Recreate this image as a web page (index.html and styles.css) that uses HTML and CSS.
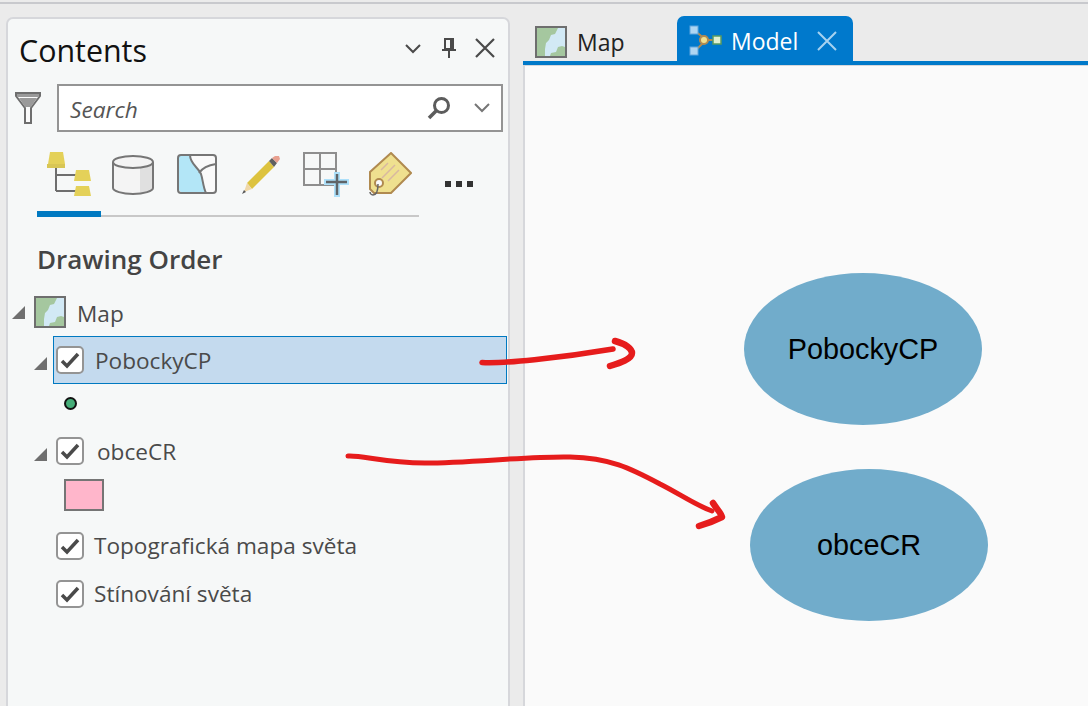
FILE: index.html
```html
<!DOCTYPE html>
<html lang="en">
<head>
    <meta charset="UTF-8">
    <meta name="viewport" content="width=device-width, initial-scale=1.0">
    <title>Contents and Model</title>
    <link rel="stylesheet" href="styles.css">
</head>
<body>
    <svg width="0" height="0" class="defs">
        <defs>
            <symbol id="map-icon" viewBox="0 0 32 32">
                <rect x="1" y="1" width="30" height="30" fill="#d2e9f5" stroke="#6e6e6e" stroke-width="2"/>
                <path d="M2 2h21l-3 6-4 1-2 5-3 3-1 6v7H2z" fill="#a5c79f"/>
                <path d="M30 30H15l1-3 5-1 2-5 4-1 3 1z" fill="#a5c79f"/>
            </symbol>
            <symbol id="check-icon" viewBox="0 0 28 28">
                <rect x="1" y="1" width="26" height="26" rx="4" fill="#fff" stroke="#949494" stroke-width="2"/>
                <path d="M6 15l5 5 11-12" fill="none" stroke="#4a4a4a" stroke-width="3.500"/>
            </symbol>
            <symbol id="tri-icon" viewBox="0 0 13 13">
                <path d="M13 0v13H0z" fill="#6f6f6f"/>
            </symbol>
        </defs>
    </svg>

    <div class="top-line"></div>

    <div class="main">
        <!-- Contents pane -->
        <div class="panel">
            <div class="panel-head">
                <span class="panel-title">Contents</span>
                <div class="panel-actions">
                    <svg class="panel-chevron" width="16" height="10" viewBox="0 0 16 10"><path d="M1 1l7 7 7-7" fill="none" stroke="#4a4a4a" stroke-width="2"/></svg>
                    <svg width="16" height="22" viewBox="0 0 16 22"><path d="M4 2h8v10H4zM1 13h14M8 13v8M10 2v10" fill="none" stroke="#4a4a4a" stroke-width="2"/></svg>
                    <svg width="20" height="20" viewBox="0 0 20 20"><path d="M1 1l18 18M19 1L1 19" fill="none" stroke="#4a4a4a" stroke-width="2.200"/></svg>
                </div>
            </div>

            <div class="search-row">
                <svg width="26" height="32" viewBox="0 0 26 32"><path d="M1 1h24v3L16 16v15h-6V16L1 4z" fill="#fafafa" stroke="#6e6e6e" stroke-width="2"/><path d="M2 2h22v3H2zM4 6h18l-6 9h-6z" fill="#9a9a9a"/></svg>
                <div class="search-box">
                    <span class="search-text">Search</span>
                    <svg class="search-glass" width="24" height="24" viewBox="0 0 24 24"><circle cx="14.500" cy="9.500" r="7" fill="none" stroke="#5c5c5c" stroke-width="3"/><path d="M9.500 14.500L2 22" stroke="#5c5c5c" stroke-width="3.500"/></svg>
                    <svg width="16" height="10" viewBox="0 0 16 10"><path d="M1 1l7 7 7-7" fill="none" stroke="#767676" stroke-width="2"/></svg>
                </div>
            </div>

            <div class="tool-row">
                <svg class="tool-tree" width="44" height="44" viewBox="0 0 44 44">
                    <path d="M9 16v23M9 23h20M9 39h20" fill="none" stroke="#6e6e6e" stroke-width="2"/>
                    <path d="M3 0h13l2 12H1z" fill="#e4d159"/><path d="M0 12h18v4H0z" fill="#d8c655"/>
                    <path d="M29 18h13l2 11H27zM29 34h13l2 10H27z" fill="#e4d159"/>
                </svg>
                <svg class="tool-db" width="42" height="40" viewBox="0 0 42 40">
                    <path d="M1 7v26c0 3 9 6 20 6s20-3 20-6V7z" fill="#f4f4f4"/>
                    <path d="M28 12l13-5v26c0 3-6 5-13 6z" fill="#e0e0e0"/>
                    <path d="M1 7v26c0 3 9 6 20 6s20-3 20-6V7" fill="none" stroke="#767676" stroke-width="2"/>
                    <ellipse cx="21" cy="7" rx="20" ry="6" fill="#f4f4f4" stroke="#767676" stroke-width="2"/>
                </svg>
                <svg class="tool-basemap" width="40" height="40" viewBox="0 0 40 40">
                    <rect x="1" y="1" width="38" height="38" rx="3" fill="#fafafa"/>
                    <path d="M2 2h12c0 8 8 12 11 20 1 7 3 12 4 16H4l-2-2z" fill="#b3e6f7"/>
                    <path d="M13 1c0 9 8 12 11 19 2 6 2 13 5 19M22 19c4-6 10-8 17-9" fill="none" stroke="#767676" stroke-width="2"/>
                    <rect x="1" y="1" width="38" height="38" rx="3" fill="none" stroke="#767676" stroke-width="2"/>
                </svg>
                <svg class="tool-pencil" width="40" height="40" viewBox="0 0 40 40">
                    <path d="M6 29L28 7l5 6-22 22z" fill="#ddc33f"/>
                    <path d="M28 7l3-3 5 5-3 4z" fill="#606060"/>
                    <path d="M31 4l3-2h4l1 3-3 4z" fill="#e8a090"/>
                    <path d="M6 29l5 6-8 3z" fill="#f0d8a8"/>
                    <path d="M3 36l2 2-4 2z" fill="#555"/>
                </svg>
                <svg class="tool-grid" width="46" height="46" viewBox="0 0 46 46">
                    <path d="M1 1h32v32H1zM17 1v32M1 17h32" fill="none" stroke="#8e8e8e" stroke-width="2"/>
                    <path d="M21 27h10v-7h6v7h9v6h-9v12h-6V33H21z" fill="#ade0fa"/>
                    <path d="M34 22v21M23 30h21" stroke="#5f6468" stroke-width="2.500"/>
                </svg>
                <svg class="tool-tag" width="44" height="46" viewBox="0 0 44 46">
                    <path d="M23 1l20 20-20 20H6L2 37V20z" fill="#efe08f" stroke="#b08a50" stroke-width="2"/>
                    <path d="M20 11l-7 7M27 13L14 26M31 18l-11 11" stroke="#d8b8a0" stroke-width="1.500"/>
                    <circle cx="11" cy="31" r="4" fill="#fafafa" stroke="#b08a50" stroke-width="2"/>
                    <path d="M10 32c0 6-1 11-5 11-2 0-3-2-3-3" fill="none" stroke="#666" stroke-width="1.500"/>
                </svg>
                <div class="tool-more"><i></i><i></i><i></i></div>
            </div>
            <div class="tool-rule"><div class="tool-rule-active"></div></div>

            <h2 class="section-title">Drawing Order</h2>

            <!-- Layer tree -->
            <div class="tree">
                <div class="tree-row row-map">
                    <svg class="tri" width="13" height="13"><use href="#tri-icon"/></svg>
                    <svg width="32" height="32"><use href="#map-icon"/></svg>
                    <span class="map-label">Map</span>
                </div>
                <div class="tree-row row-layer selected">
                    <svg class="tri" width="13" height="13"><use href="#tri-icon"/></svg>
                    <svg width="28" height="28"><use href="#check-icon"/></svg>
                    <span class="layer-label">PobockyCP</span>
                </div>
                <div class="legend-dot"><i></i></div>
                <div class="tree-row row-layer">
                    <svg class="tri" width="13" height="13"><use href="#tri-icon"/></svg>
                    <svg width="28" height="28"><use href="#check-icon"/></svg>
                    <span class="layer-label obce-label">obceCR</span>
                </div>
                <div class="legend-swatch"></div>
                <div class="tree-row row-layer row-plain">
                    <svg width="28" height="28"><use href="#check-icon"/></svg>
                    <span class="layer-label">Topografická mapa světa</span>
                </div>
                <div class="tree-row row-layer row-plain">
                    <svg width="28" height="28"><use href="#check-icon"/></svg>
                    <span class="layer-label">Stínování světa</span>
                </div>
            </div>
        </div>

        <!-- Model view -->
        <div class="view">
            <div class="tabs">
                <div class="tab">
                    <svg width="32" height="32"><use href="#map-icon"/></svg>
                    <span>Map</span>
                </div>
                <div class="tab tab-active">
                    <svg width="34" height="32" viewBox="0 0 34 32">
                        <path d="M5 5l12 10M5 27l12-12M17 15h12" stroke="#b08a50" stroke-width="2"/>
                        <rect x="1" y="1" width="8" height="8" fill="#aed5f2" stroke="#5fa5dd"/>
                        <rect x="1" y="22" width="8" height="8" fill="#aed5f2" stroke="#5fa5dd"/>
                        <circle cx="15" cy="15" r="4" fill="#f0e090" stroke="#b08a50" stroke-width="2"/>
                        <rect x="24" y="11" width="8" height="8" fill="#dff0d0" stroke="#5a9a60" stroke-width="1.500"/>
                    </svg>
                    <span>Model</span>
                    <svg class="tab-close" width="20" height="20" viewBox="0 0 20 20"><path d="M1 1l18 18M19 1L1 19" fill="none" stroke="#a6d2f0" stroke-width="2"/></svg>
                </div>
            </div>
            <div class="canvas">
                <div class="node node-pobocky">PobockyCP</div>
                <div class="node node-obce">obceCR</div>
            </div>
        </div>
    </div>

    <!-- Hand drawn arrows over both panes -->
    <svg class="arrows" width="1088" height="706" viewBox="0 0 1088 706">
        <g fill="none" stroke="#e61c1c" stroke-linecap="round" stroke-linejoin="round">
            <path d="M482 362.500C500 364 560 358 613 349" stroke-width="5.500"/>
            <path d="M615 341C626 344 632 349 632 353C632 359 620 363 610 366" stroke-width="6.500"/>
            <path d="M348 456C362 455 385 463 425 463C470 463 530 456 570 457C610 458 630 468 660 484C680 494 695 505 712 511" stroke-width="5"/>
            <path d="M713 503C716 508 721 513 722 517C714 521 706 524 699 526" stroke-width="6.500"/>
        </g>
    </svg>
</body>
</html>
```

FILE: styles.css
```css
/* Basic Reset */
* {
    margin: 0;
    padding: 0;
    box-sizing: border-box;
}

html, body {
    width: 1088px;
    height: 706px;
    overflow: hidden;
}

body {
    font-family: 'Open Sans', 'Noto Sans', sans-serif;
    background-color: #ebebeb;
    position: relative;
}

svg {
    display: block;
    flex: none;
}

.defs {
    position: absolute;
}

.top-line {
    height: 2px;
    margin-top: 2px;
    border-top: 2px solid #c8c9cd;
}

/* Main layout */
.main {
    display: flex;
    height: 702px;
    padding: 13px 0 0 6px;
}

/* Contents pane */
.panel {
    width: 504px;
    height: 720px;
    background-color: #f6f8f8;
    border: 2px solid #d6d7db;
    border-radius: 7px 7px 0 0;
    flex: none;
}

.panel-head {
    display: flex;
    justify-content: space-between;
    align-items: center;
    height: 60px;
    padding: 0 13px 0 11px;
}

.panel-title {
    font-size: 30.400px;
    color: #111;
    margin-top: 2px;
}

.panel-actions {
    display: flex;
    align-items: center;
    gap: 18px;
    margin-top: -2px;
}

.panel-chevron {
    margin-right: 2px;
    margin-top: 2px;
}

.search-row {
    display: flex;
    align-items: center;
    gap: 16px;
    height: 48px;
    margin-top: 5px;
    padding-left: 7px;
    padding-right: 5px;
}

.search-box {
    flex: 1;
    height: 48px;
    background-color: #fff;
    border: 2px solid #949494;
    display: flex;
    align-items: center;
    padding: 0 11px;
}

.search-text {
    font-size: 22.700px;
    font-style: italic;
    color: #555;
    flex: 1;
    margin-top: 2px;
}

.search-glass {
    margin-right: 23px;
}

.tool-row {
    height: 87px;
    display: flex;
    align-items: flex-start;
    padding: 20px 0 0 39px;
}

.tool-db { margin: 3px 0 0 21px; }
.tool-basemap { margin: 2px 0 0 23px; }
.tool-pencil { margin: 2px 0 0 24px; }
.tool-grid { margin: 0 0 0 22px; }
.tool-tag { margin: 0 0 0 19px; }

.tool-more {
    display: flex;
    gap: 5px;
    margin: 29px 0 0 33px;
}

.tool-more i {
    width: 6px;
    height: 6px;
    background-color: #333;
}

.tool-rule {
    height: 2px;
    width: 382px;
    margin: -4px 0 0 29px;
    background-color: #c8c8c8;
    position: relative;
}

.tool-rule-active {
    position: absolute;
    left: 0;
    bottom: 0;
    width: 64px;
    height: 6px;
    background-color: #0079c1;
}

.section-title {
    font-size: 26px;
    font-weight: 600;
    color: #444;
    padding-left: 29px;
    margin-top: 24px;
    line-height: 36px;
}

/* Layer tree */
.tree {
    margin-top: 11px;
    padding-left: 4px;
    font-size: 22.600px;
    color: #4a4a4a;
}

.tree-row {
    display: flex;
    align-items: center;
}

.row-map {
    height: 48px;
    gap: 9px;
}

.map-label {
    margin-left: 2px;
    margin-top: 2px;
}

.row-layer {
    height: 48px;
    margin-left: 41px;
    width: 454px;
    border: 1px solid transparent;
    padding-left: 2px;
}

.row-layer .tri {
    margin-left: -22px;
    margin-right: 9px;
    margin-top: 6px;
}

.row-layer .layer-label {
    margin-left: 11px;
}

.row-layer .obce-label {
    margin-left: 13px;
}

.row-plain .layer-label {
    margin-left: 10px;
    margin-top: -2px;
}

.selected {
    background-color: #c4daee;
    border-color: #0079c1;
}

.legend-dot {
    height: 43px;
    padding: 13px 0 0 52px;
}

.legend-dot i {
    display: block;
    width: 13px;
    height: 13px;
    border-radius: 50%;
    background-color: #45ad78;
    border: 2px solid #111;
}

.legend-swatch {
    width: 40px;
    height: 32px;
    margin: 4px 0 11px 52px;
    background-color: #ffb6cb;
    border: 2px solid #757575;
}

/* Model view */
.view {
    flex: 1;
    margin-left: 13px;
    display: flex;
    flex-direction: column;
}

.tabs {
    display: flex;
    height: 49px;
    margin-top: -1px;
    border-bottom: 4px solid #0079c9;
    padding-left: 12px;
    font-size: 23px;
    color: #222;
}

.tab {
    width: 142px;
    display: flex;
    align-items: center;
    gap: 10px;
    padding-top: 7px;
    height: 45px;
}

.tab-active {
    width: 176px;
    height: 45px;
    padding: 4px 0 0 12px;
    gap: 8px;
    background-color: #0079cc;
    color: #fff;
    border-radius: 7px 7px 0 0;
}

.tab-close {
    margin-left: 11px;
}

.canvas {
    position: relative;
    flex: 1;
    background-color: #fafafa;
    border-top: 1px solid #d6d7db;
    border-left: 2px solid #d6d7db;
}

/* Nodes sit at their own place on the model canvas */
.node {
    position: absolute;
    width: 238px;
    height: 152px;
    border-radius: 50%;
    background-color: #71accb;
    color: #000;
    font-family: 'Liberation Sans', Arial, sans-serif;
    font-size: 28.800px;
    display: flex;
    align-items: center;
    justify-content: center;
}

.node-pobocky {
    left: 219px;
    top: 207px;
}

.node-obce {
    left: 225px;
    top: 403px;
}

.arrows {
    position: absolute;
    left: 0;
    top: 0;
    pointer-events: none;
}
```
